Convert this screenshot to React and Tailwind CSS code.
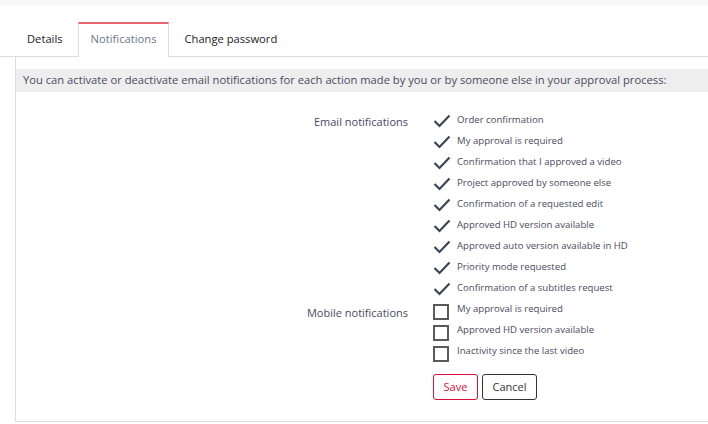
const EMAIL = [
  "Order confirmation",
  "My approval is required",
  "Confirmation that I approved a video",
  "Project approved by someone else",
  "Confirmation of a requested edit",
  "Approved HD version available",
  "Approved auto version available in HD",
  "Priority mode requested",
  "Confirmation of a subtitles request",
];

const MOBILE = [
  "My approval is required",
  "Approved HD version available",
  "Inactivity since the last video",
];

function Check() {
  return (
    <svg width="18" height="14" viewBox="0 0 18 14" className="mb-[5px] shrink-0">
      <path d="M1.5 7 L6.5 12 L16.5 1.5" fill="none" stroke="#3b4757" strokeWidth="2.2" />
    </svg>
  );
}

function Box() {
  return <span className="block size-[16px] shrink-0 border-2 border-[#5a5a5a] bg-white" />;
}

function Row({ checked, label }) {
  return (
    <div className="flex h-[21px] items-center">
      <div className="flex w-[24px] items-center">{checked ? <Check /> : <Box />}</div>
      <span className="-mt-[6px] text-[9.6px] text-[#4a4b5e]">{label}</span>
    </div>
  );
}

export default function App() {
  const tabs = ["Details", "Notifications", "Change password"];
  return (
    <div className="h-[424px] w-[708px] overflow-hidden bg-white font-['Open_Sans',sans-serif]">
      <div className="h-[5px] bg-[#f8f8f8]" />
      <div className="flex pl-[15px] pt-[17px] border-b border-[#dddddd]">
        {tabs.map((t, i) => (
          <div
            key={t}
            className={
              t === "Notifications"
                ? "-mb-px border-x border-t-2 border-x-[#dddddd] border-t-[#e8636f] bg-white px-[12px] pb-[8px] pt-[7px] text-[11.2px] text-[#6b7a8c]"
                : i === 0
                  ? "pl-[12px] pr-[15px] pb-[8px] pt-[9px] text-[11.2px] text-[#222]"
                  : "pl-[15px] pr-[12px] pb-[8px] pt-[9px] text-[11.2px] text-[#222]"
            }
          >
            {t}
          </div>
        ))}
      </div>
      <div className="ml-[15px] h-[365px] w-[720px] border-x border-b border-[#dddddd] pt-[12px]">
        <div className="flex h-[23px] items-center bg-[#eeeeee] px-[7px] text-[11.2px] text-[#4a4b5e]">
          You can activate or deactivate email notifications for each action made by you or by someone else in your approval process:
        </div>
        <div className="mt-[21px] grid grid-cols-[392px_1fr] gap-x-[25px]">
          <div className="pt-[1px] text-right text-[11px] text-[#4a4566]">Email notifications</div>
          <div className="flex flex-col">
            {EMAIL.map((e) => (
              <Row key={e} checked label={e} />
            ))}
          </div>
          <div className="pt-[3px] text-right text-[11px] text-[#4a4b5e]">Mobile notifications</div>
          <div className="flex flex-col">
            {MOBILE.map((e) => (
              <Row key={e} label={e} />
            ))}
          </div>
          <div />
          <div className="mt-[9px] flex gap-[4px]">
            <button className="h-[26px] w-[45px] rounded-[3px] border border-[#d9123b] bg-white text-[11px] text-[#d9123b]">
              Save
            </button>
            <button className="h-[26px] w-[55px] rounded-[3px] border border-[#333] bg-white text-[11px] text-[#333]">
              Cancel
            </button>
          </div>
        </div>
      </div>
    </div>
  );
}
